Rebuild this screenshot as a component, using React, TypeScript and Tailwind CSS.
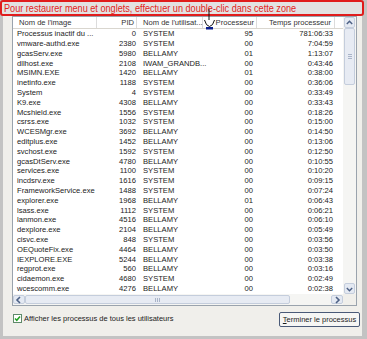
const rows: [string, string, string, string, string][] = [
  ["Processus inactif du ...", "0", "SYSTEM", "95", "781:06:33"],
  ["vmware-authd.exe", "2380", "SYSTEM", "00", "7:04:59"],
  ["gcasServ.exe", "5980", "BELLAMY", "01", "1:13:07"],
  ["dllhost.exe", "2108", "IWAM_GRANDB...", "00", "0:43:46"],
  ["MSIMN.EXE", "1420", "BELLAMY", "01", "0:38:00"],
  ["inetinfo.exe", "1188", "SYSTEM", "00", "0:36:06"],
  ["System", "4", "SYSTEM", "00", "0:33:49"],
  ["K9.exe", "4308", "BELLAMY", "00", "0:33:43"],
  ["Mcshield.exe", "1556", "SYSTEM", "00", "0:18:26"],
  ["csrss.exe", "1032", "SYSTEM", "00", "0:15:00"],
  ["WCESMgr.exe", "3692", "BELLAMY", "00", "0:14:50"],
  ["editplus.exe", "1452", "BELLAMY", "00", "0:13:06"],
  ["svchost.exe", "1592", "SYSTEM", "00", "0:12:50"],
  ["gcasDtServ.exe", "4780", "BELLAMY", "00", "0:10:55"],
  ["services.exe", "1100", "SYSTEM", "00", "0:10:20"],
  ["incdsrv.exe", "1616", "SYSTEM", "00", "0:09:15"],
  ["FrameworkService.exe", "1488", "SYSTEM", "00", "0:07:24"],
  ["explorer.exe", "1968", "BELLAMY", "01", "0:06:43"],
  ["lsass.exe", "1112", "SYSTEM", "00", "0:06:21"],
  ["lanmon.exe", "4516", "BELLAMY", "00", "0:06:10"],
  ["dexplore.exe", "2104", "BELLAMY", "00", "0:05:49"],
  ["cisvc.exe", "848", "SYSTEM", "00", "0:03:56"],
  ["OEQuoteFix.exe", "4464", "BELLAMY", "00", "0:03:50"],
  ["IEXPLORE.EXE", "5244", "BELLAMY", "00", "0:03:38"],
  ["regprot.exe", "560", "BELLAMY", "00", "0:03:16"],
  ["cidaemon.exe", "4680", "SYSTEM", "00", "0:02:49"],
  ["wcescomm.exe", "4276", "BELLAMY", "00", "0:02:38"],
];

function Arrow({ dir }: { dir: "up" | "down" | "left" | "right" }) {
  const d = {
    up: "M2 6 L5 3 L8 6",
    down: "M2 4 L5 7 L8 4",
    left: "M6 2 L3 5 L6 8",
    right: "M4 2 L7 5 L4 8",
  }[dir];
  return (
    <svg className="w-[10px] h-[10px]" viewBox="0 0 10 10" fill="none">
      <path d={d} stroke="#4d6185" strokeWidth={1.6} />
    </svg>
  );
}

export default function App() {
  return (
    <div className="relative w-[367px] h-[339px] bg-[#c3c3c3] font-['Liberation_Sans',Arial,sans-serif] text-[7.6px] text-[#222] overflow-hidden">
      <div className="absolute left-[3px] top-0 w-[359px] h-[336px] bg-[#f0efeb] flex flex-col pl-[9px] pt-[16px]">
        {/* list view */}
        <div className="w-[345px] h-[290px] border border-[#9aa3ad] bg-white flex flex-col">
          <div className="flex h-[277px]">
            <div className="w-[330px] flex flex-col">
              <div className="flex h-[12px] items-center bg-white border-b border-[#d9d6cf] text-[#333]">
                <div className="w-[84px] h-full flex items-center pl-[6px] border-r border-[#dcdcdc]">Nom de l'image</div>
                <div className="w-[40px] h-full flex items-center justify-end pr-[2px] border-r border-[#dcdcdc]">PID</div>
                <div className="w-[66px] h-full flex items-center pl-[6px] border-r border-[#dcdcdc] whitespace-nowrap">Nom de l'utilisat...</div>
                <div className="w-[54px] h-full flex items-center justify-end pr-[2px] border-r border-[#dcdcdc]">Processeur</div>
                <div className="w-[78px] h-full flex items-center justify-end pr-[3px] border-r border-[#dcdcdc]">Temps processeur</div>
                <div className="flex-1" />
              </div>
              {rows.map((r) => (
                <div key={r[0]} className="flex h-[9.8px] items-center whitespace-nowrap">
                  <div className="w-[84px] pl-[4px]">{r[0]}</div>
                  <div className="w-[40px] text-right pr-[1px]">{r[1]}</div>
                  <div className="w-[66px] pl-[6px]">{r[2]}</div>
                  <div className="w-[54px] text-right pr-[4px]">{r[3]}</div>
                  <div className="w-[78px] text-right pr-[2px]">{r[4]}</div>
                </div>
              ))}
            </div>
            {/* vertical scrollbar */}
            <div className="w-[13px] flex flex-col bg-[#f5f5f3]">
              <div className="h-[11px] mx-[1px] flex items-center justify-center rounded-[2px] border border-[#c4cddc] bg-[#e4e9f2]">
                <Arrow dir="up" />
              </div>
              <div className="h-[57px] mx-[1px] flex items-center justify-center rounded-[2px] border border-[#c4cddc] bg-[#e7ebf3]">
                <div className="w-[4px] flex flex-col gap-[1px]">
                  <div className="h-px bg-[#a9b4c8]" />
                  <div className="h-px bg-[#a9b4c8]" />
                  <div className="h-px bg-[#a9b4c8]" />
                </div>
              </div>
              <div className="flex-1" />
              <div className="h-[11px] mx-[1px] flex items-center justify-center rounded-[2px] border border-[#c4cddc] bg-[#e4e9f2]">
                <Arrow dir="down" />
              </div>
            </div>
          </div>
          {/* horizontal scrollbar */}
          <div className="flex h-[11px]">
            <div className="w-[330px] flex bg-[#f5f5f3]">
              <div className="w-[12px] my-[1px] flex items-center justify-center rounded-[2px] border border-[#c4cddc] bg-[#e4e9f2]">
                <Arrow dir="left" />
              </div>
              <div className="w-[265px] my-[1px] flex items-center justify-center rounded-[2px] border border-[#c4cddc] bg-[#e7ebf3]">
                <div className="h-[4px] flex gap-[1px]">
                  <div className="w-px bg-[#a9b4c8]" />
                  <div className="w-px bg-[#a9b4c8]" />
                  <div className="w-px bg-[#a9b4c8]" />
                </div>
              </div>
              <div className="flex-1" />
              <div className="w-[12px] my-[1px] flex items-center justify-center rounded-[2px] border border-[#c4cddc] bg-[#e4e9f2]">
                <Arrow dir="right" />
              </div>
            </div>
            <div className="flex-1 bg-[#f0efeb]" />
          </div>
        </div>
        {/* bottom row */}
        <div className="flex justify-between items-start mt-[6px] pl-[1px] pr-[2px]">
          <div className="flex items-center gap-[2px] mt-[1px]">
            <div className="w-[9px] h-[9px] border border-[#5f8a6a] bg-white flex items-center justify-center">
              <svg className="w-[7px] h-[7px]" viewBox="0 0 7 7" fill="none">
                <path d="M1 3.5 L2.8 5.3 L6 1.5" stroke="#21a121" strokeWidth={1.5} />
              </svg>
            </div>
            <span className="text-[7.5px]">Afficher les processus de tous les utilisateurs</span>
          </div>
          <button className="w-[81px] h-[15px] rounded-[2px] border border-[#4a5a78] bg-[#f6f6f4] text-[7.5px] text-[#1c1c1c] flex items-center justify-center">
            <span><span className="underline">T</span>erminer le processus</span>
          </button>
        </div>
      </div>
      {/* red banner */}
      <div className="absolute left-0 top-0 w-[364px] h-[16px] border-2 border-[#e01c1c] rounded-[3px] bg-[#e2e2e2] flex items-center pl-[2px]">
        <span className="origin-left scale-x-[0.83] font-['Liberation_Sans',Arial,sans-serif] text-[11px] leading-none text-[#e3221c] whitespace-nowrap">
          Pour restaurer menu et onglets, effectuer un double-clic dans cette zone
        </span>
      </div>
      {/* mouse pointer */}
      <svg className="absolute left-[203px] top-[8px] w-[13px] h-[22px]" viewBox="0 0 13 22" fill="none">
        <path d="M6 1 L6 12" stroke="#111" strokeWidth={1} />
        <path d="M1.5 12 Q3 18 6.5 18.5 Q10 18 11.5 12" fill="#fff" stroke="#111" strokeWidth={1} />
        <rect x="3" y="19" width="7" height="2.5" fill="#0a1e8c" />
      </svg>
    </div>
  );
}
